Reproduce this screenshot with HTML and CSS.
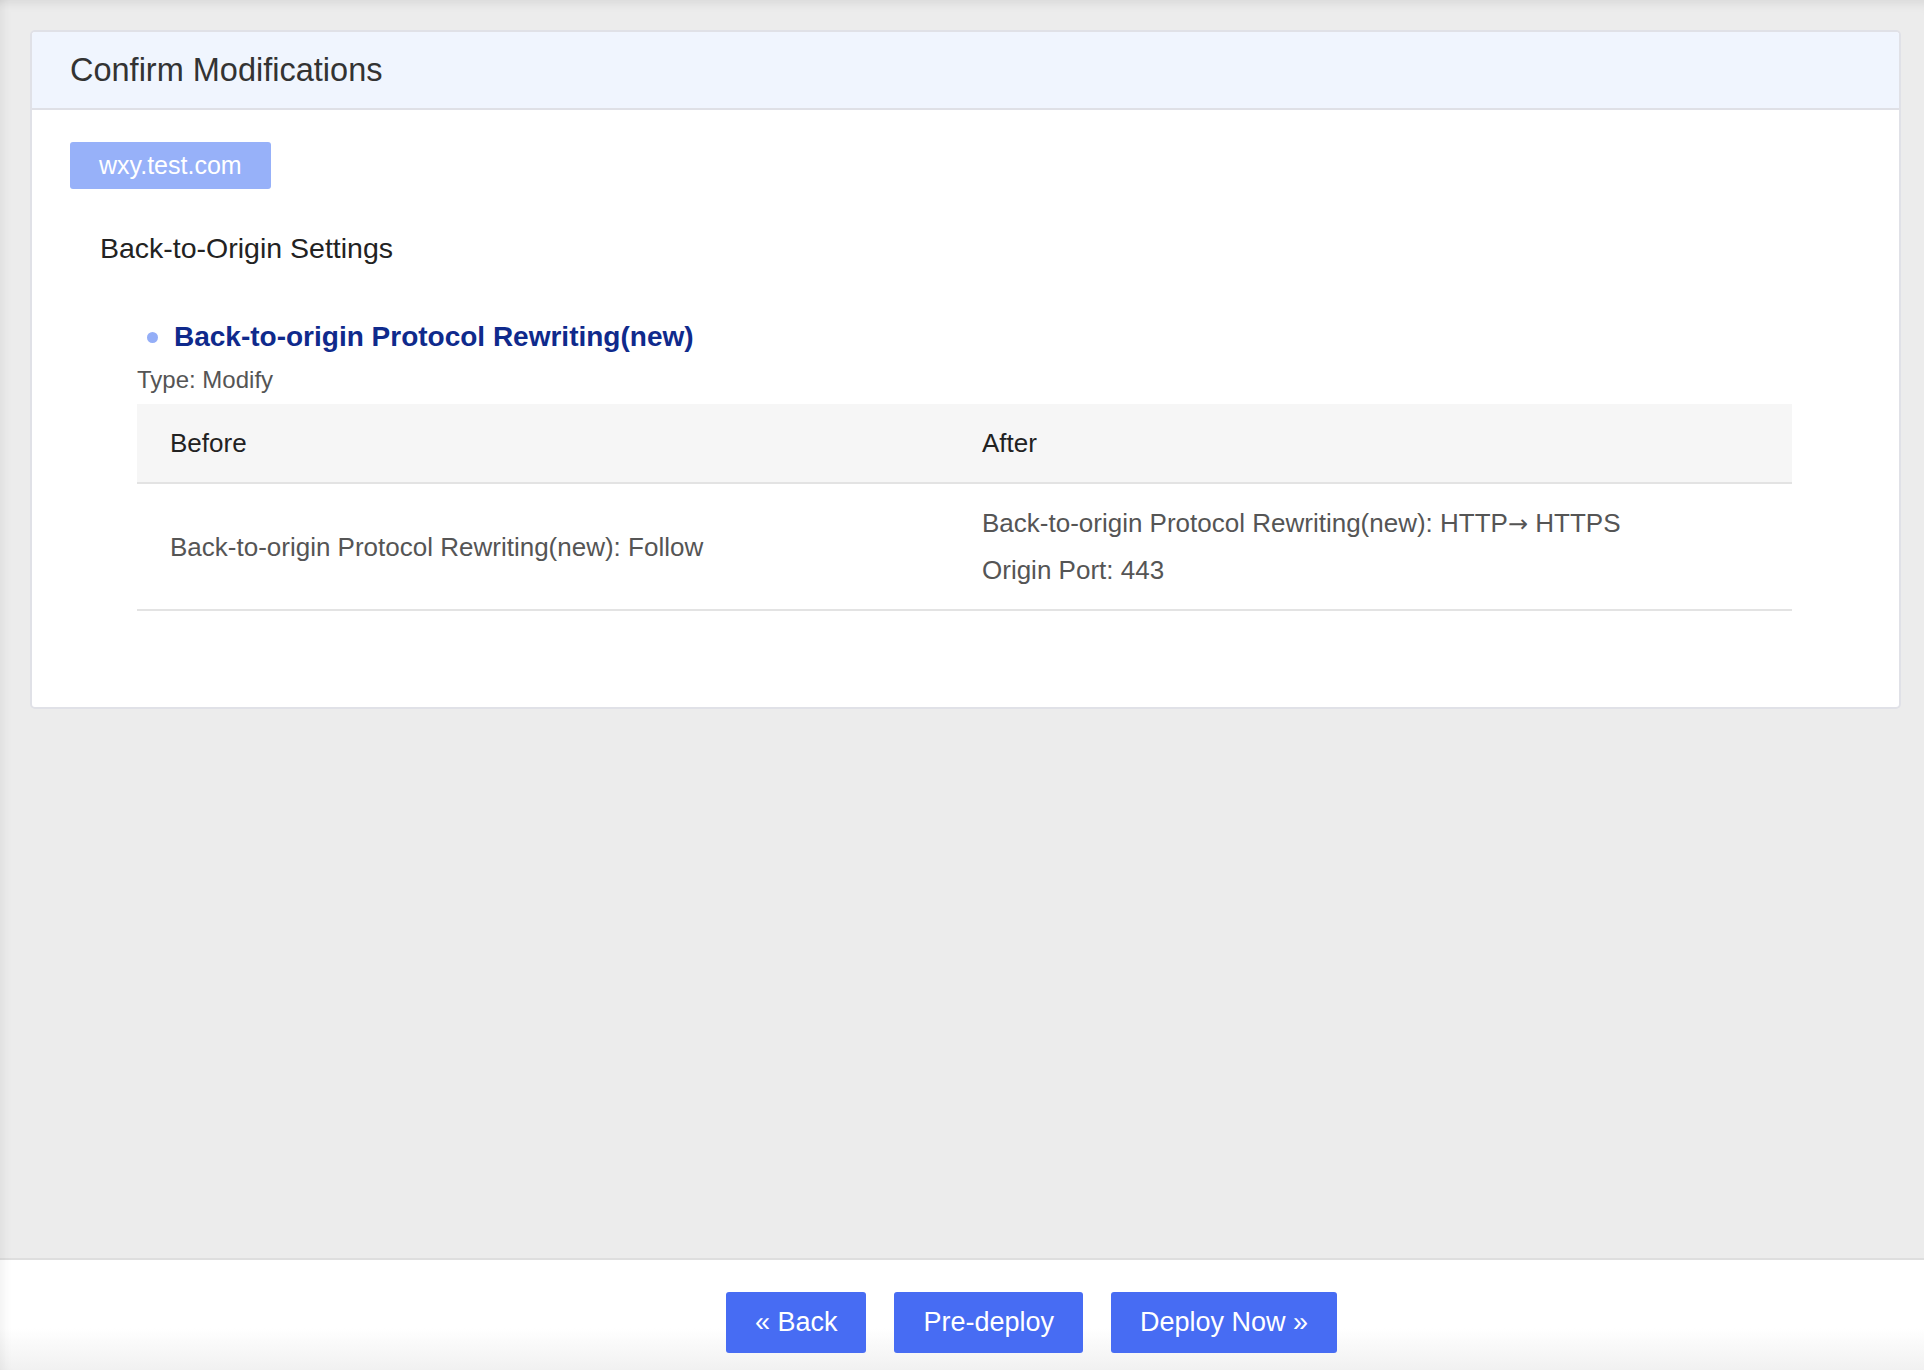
FILE: index.html
```html
<!DOCTYPE html>
<html lang="en">
<head>
<meta charset="utf-8">
<title>Confirm Modifications</title>
<link rel="stylesheet" href="styles.css">
</head>
<body>
<div class="page">
  <main class="main">
    <section class="card">
      <header class="card-header">Confirm Modifications</header>
      <div class="card-body">
        <div class="domain-tag">wxy.test.com</div>
        <div class="section">
          <h2 class="section-title">Back-to-Origin Settings</h2>
          <div class="item">
            <h3 class="item-title"><span class="dot"></span>Back-to-origin Protocol Rewriting(new)</h3>
            <div class="item-type">Type: Modify</div>
            <div class="diff">
              <div class="diff-head">Before</div>
              <div class="diff-head">After</div>
              <div class="diff-cell">
                <div class="line">Back-to-origin Protocol Rewriting(new): Follow</div>
              </div>
              <div class="diff-cell">
                <div class="line">Back-to-origin Protocol Rewriting(new): HTTP<span class="arrow">→</span> HTTPS</div>
                <div class="line">Origin Port: 443</div>
              </div>
            </div>
          </div>
        </div>
      </div>
    </section>
  </main>
  <footer class="footer">
    <div class="actions">
      <button class="btn">« Back</button>
      <button class="btn">Pre-deploy</button>
      <button class="btn">Deploy Now »</button>
    </div>
  </footer>
</div>
</body>
</html>
```
FILE: styles.css
```css
* { box-sizing: border-box; }
html, body { margin: 0; padding: 0; }
body {
  font-family: "Liberation Sans", Arial, Helvetica, sans-serif;
  background: #ececec;
  color: #333;
}
.page {
  height: 1370px;
  display: flex;
  flex-direction: column;
}
.page::after {
  content: "";
  position: fixed;
  inset: 0;
  pointer-events: none;
  box-shadow: inset 0 12px 12px -10px rgba(0,0,0,0.10), inset 12px 0 12px -10px rgba(0,0,0,0.07);
}
.main {
  flex: 1;
  padding: 30px 23px 0 30px;
}
.card {
  background: #fff;
  border: 2px solid #e0e1e7;
  border-radius: 5px;
  overflow: hidden;
}
.card-header {
  height: 78px;
  background: #f0f5fe;
  border-bottom: 2px solid #dfe0e6;
  display: flex;
  align-items: center;
  padding: 0 38px;
  font-size: 32.5px;
  color: #333;
}
.card-body {
  padding: 32px 38px 96px;
}
.domain-tag {
  display: inline-flex;
  align-items: center;
  height: 47px;
  padding: 0 29px;
  background: #97b1f9;
  color: #fff;
  font-size: 25px;
  border-radius: 3px;
}
.section {
  margin-top: 42px;
}
.section-title {
  margin: 0;
  padding-left: 30px;
  font-size: 28.5px;
  font-weight: normal;
  line-height: 34px;
  color: #222;
}
.item {
  margin: 55px 69px 0 67px;
}
.item-title {
  margin: 0;
  display: flex;
  align-items: center;
  gap: 16px;
  font-size: 28px;
  line-height: 34px;
  font-weight: bold;
  color: #0f2a8c;
}
.dot {
  width: 11px;
  height: 11px;
  margin-left: 10px;
  border-radius: 50%;
  background: #94aef7;
}
.item-type {
  margin-top: 11px;
  font-size: 24px;
  line-height: 30px;
  color: #555;
}
.diff {
  margin-top: 9px;
  display: grid;
  grid-template-columns: 812px 1fr;
  font-size: 26px;
}
.diff-head {
  height: 80px;
  background: #f6f6f6;
  border-bottom: 2px solid #e3e3e3;
  display: flex;
  align-items: center;
  padding-left: 33px;
  color: #222;
}
.diff-cell {
  min-height: 126px;
  padding: 16px 0 16px 33px;
  border-bottom: 2px solid #e3e3e3;
  display: flex;
  flex-direction: column;
  justify-content: center;
  color: #555;
}
.line {
  line-height: 46px;
}
.arrow {
  font-family: "DejaVu Sans", sans-serif;
  font-size: 24px;
}
.footer {
  height: 112px;
  border-top: 2px solid #dedede;
  background: linear-gradient(to bottom, #ffffff 0%, #ffffff 62%, #f1f1f1 100%);
  padding: 32px 0 0 139px;
  display: flex;
  justify-content: center;
  align-items: flex-start;
}
.actions {
  display: flex;
  gap: 28px;
}
.btn {
  height: 61px;
  padding: 0 29px;
  border: none;
  border-radius: 3px;
  background: #476cf3;
  color: #fff;
  font-family: "Liberation Sans", Arial, Helvetica, sans-serif;
  font-size: 27px;
  cursor: pointer;
}
```
